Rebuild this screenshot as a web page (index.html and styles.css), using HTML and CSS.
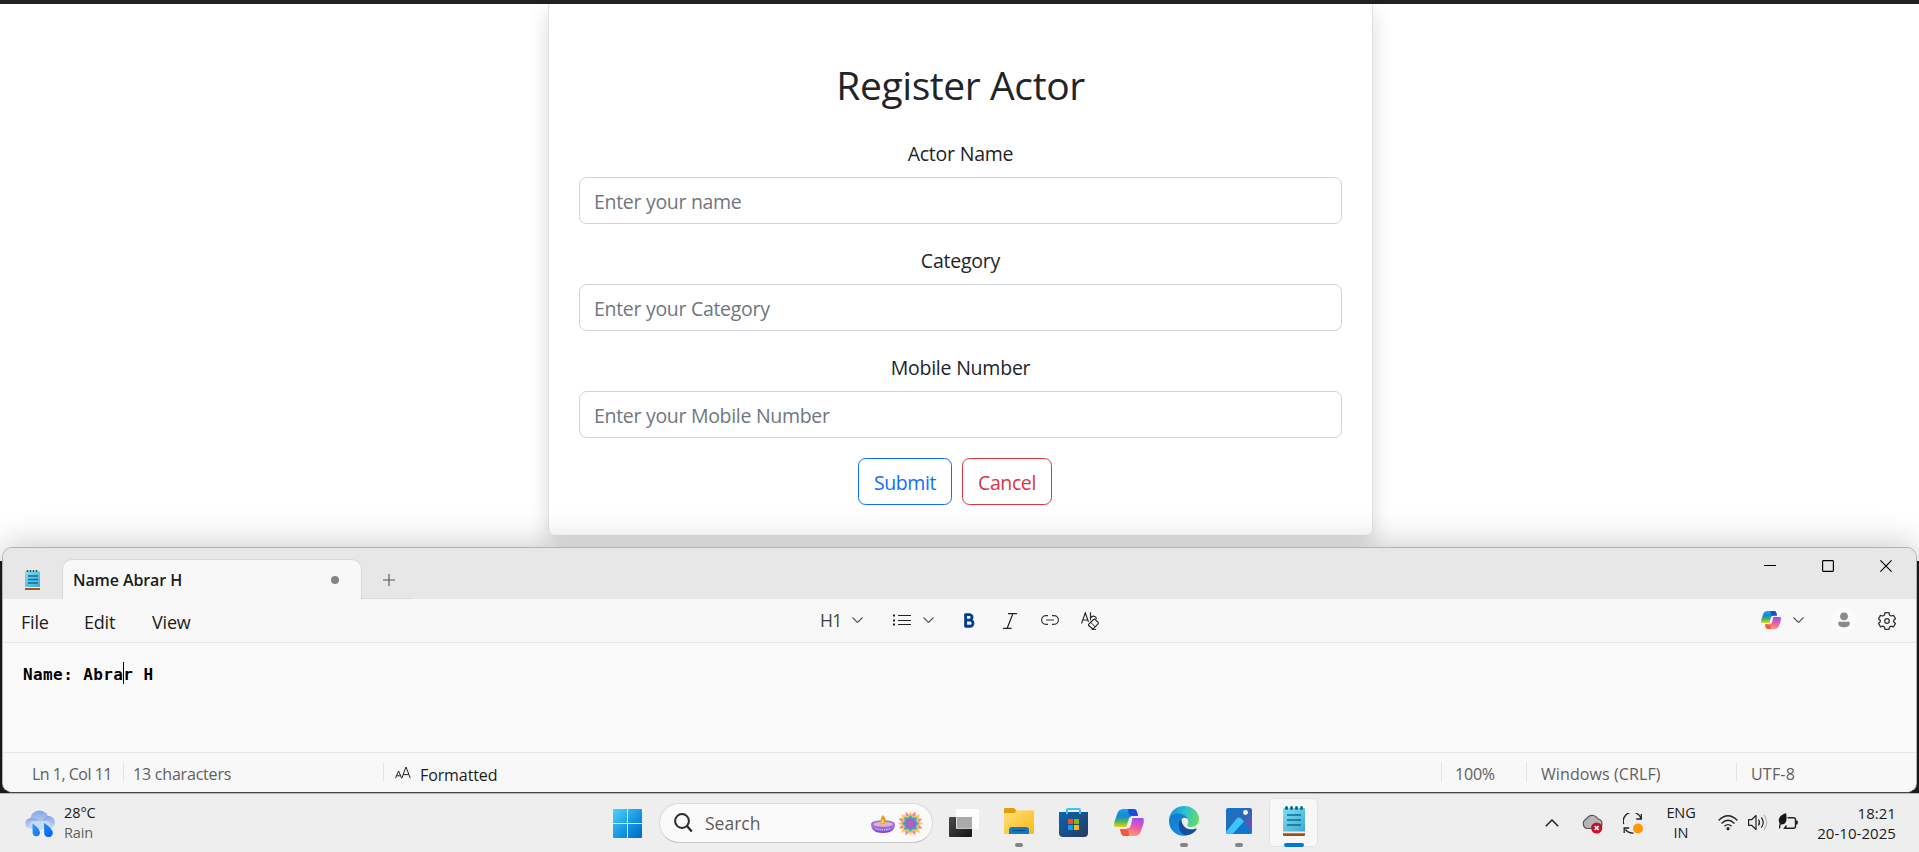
FILE: index.html
```html
<!DOCTYPE html>
<html lang="en">
<head>
<meta charset="utf-8">
<title>Register Actor</title>
<link rel="stylesheet" href="styles.css">
</head>
<body>
<svg class="defs" width="0" height="0" aria-hidden="true">
  <defs>
    <linearGradient id="cpA" x1="0" y1="0" x2="0" y2="1"><stop offset="0" stop-color="#19a5e8"/><stop offset=".4" stop-color="#1488d8"/><stop offset=".7" stop-color="#4fb85a"/><stop offset="1" stop-color="#f4d013"/></linearGradient>
    <linearGradient id="cpB" x1=".6" y1="0" x2=".3" y2="1"><stop offset="0" stop-color="#a24cf0"/><stop offset=".5" stop-color="#ef5f9f"/><stop offset="1" stop-color="#ffa36a"/></linearGradient>
    <linearGradient id="pad" x1="0" y1="0" x2="1" y2="1"><stop offset="0" stop-color="#7fe0f7"/><stop offset="1" stop-color="#3fa9cf"/></linearGradient>
    <linearGradient id="win" x1="0" y1="0" x2="1" y2="1"><stop offset="0" stop-color="#4fd3fb"/><stop offset=".6" stop-color="#1291df"/><stop offset="1" stop-color="#0168c5"/></linearGradient>
    <linearGradient id="fold" x1="0" y1="0" x2="1" y2="1"><stop offset="0" stop-color="#ffe07a"/><stop offset="1" stop-color="#fdb913"/></linearGradient>
    <linearGradient id="store" x1="0" y1="0" x2="1" y2="1"><stop offset="0" stop-color="#0b65b0"/><stop offset="1" stop-color="#253a62"/></linearGradient>
    <linearGradient id="edgeTop" x1="0" y1=".4" x2="1" y2=".6"><stop offset="0" stop-color="#1692df"/><stop offset=".5" stop-color="#2fc0d2"/><stop offset="1" stop-color="#66dd5c"/></linearGradient>
    <linearGradient id="edgeLow" x1="0" y1="0" x2=".5" y2="1"><stop offset="0" stop-color="#1478c8"/><stop offset="1" stop-color="#1590e6"/></linearGradient>
    <linearGradient id="photo" x1="0" y1="0" x2="1" y2=".8"><stop offset="0" stop-color="#0f79c9"/><stop offset=".6" stop-color="#3065b5"/><stop offset="1" stop-color="#7b4eb5"/></linearGradient>
    <linearGradient id="hill" x1="0" y1="1" x2="1" y2="0"><stop offset="0" stop-color="#34c8fa"/><stop offset="1" stop-color="#43c4f3"/></linearGradient>
    <linearGradient id="dark" x1="0" y1="0" x2="1" y2="1"><stop offset="0" stop-color="#4a4a4a"/><stop offset="1" stop-color="#161616"/></linearGradient>
    <linearGradient id="cloud" x1="0" y1="0" x2="0" y2="1"><stop offset="0" stop-color="#84a5e4"/><stop offset="1" stop-color="#d3e1f8"/></linearGradient>
    <linearGradient id="drop" x1="0" y1="0" x2="1" y2="1"><stop offset="0" stop-color="#2f9bf5"/><stop offset="1" stop-color="#0560ff"/></linearGradient>
    <linearGradient id="bowl" x1="0" y1="0" x2="0" y2="1"><stop offset="0" stop-color="#b884ee"/><stop offset="1" stop-color="#7a3fd0"/></linearGradient>
    <symbol id="copilot" viewBox="0 0 30 27">
      <path d="M10 0h9.500c2 0 3 1 3.500 3l.9 3.500h-4.500c-2 0-3 1-3.500 3l-2.500 8.500H0.800C0 16 0 14.500.5 12.500L3.500 4C4.500 1.200 6.500 0 10 0z" fill="url(#cpA)"/>
      <path d="M14 0h5.500c2 0 3 1 3.500 3l1 4h-5c-3 0-4-1-4.500-3z" fill="#1650d8"/>
      <path d="M20 27h-9.500c-2 0-3-1-3.500-3l-1-3.500h4.500c2 0 3-1 3.500-3L16.500 9h12.700c.8 2 .8 3.500.3 5.500l-3 8.500c-1 2.800-3 4-6.500 4z" fill="url(#cpB)"/>
      <path d="M15 27h-4.500c-2 0-3-1-3.500-3l-1-4h4c3 0 4 1 4.500 3z" fill="#ef5b3c"/>
      <path d="M18.800 8h-1.600c-1.500 0-2 .8-2.500 2.300l-2.600 8.700h2c1.500 0 2-.8 2.500-2.300z" fill="#f1f1f1"/>
    </symbol>
    <symbol id="notepad" viewBox="0 0 22 30">
      <path d="M0 26h22v2.800q0 1.200-1 1.200H1q-1 0-1-1.200z" fill="#a34f12"/>
      <path d="M0 25.500h22v1.800H0z" fill="#f3ece6"/>
      <path d="M1 2h20q1 0 1 1v22.500H0V3q0-1 1-1z" fill="url(#pad)"/>
      <path d="M4 9h14M4 14h14M4 19h14" stroke="#0b6c94" stroke-width="1.700"/>
      <g fill="#0e6d8c"><rect x="2" y="0" width="3" height="4" rx="1.500"/><rect x="7" y="0" width="3" height="4" rx="1.500"/><rect x="12" y="0" width="3" height="4" rx="1.500"/><rect x="17" y="0" width="3" height="4" rx="1.500"/></g>
    </symbol>
  </defs>
</svg>

<main class="browser">
  <form class="card">
    <h1 class="card-title">Register Actor</h1>
    <label class="label" for="name">Actor Name</label>
    <input class="field" id="name" placeholder="Enter your name">
    <label class="label" for="category">Category</label>
    <input class="field" id="category" placeholder="Enter your Category">
    <label class="label" for="mobile">Mobile Number</label>
    <input class="field" id="mobile" placeholder="Enter your Mobile Number">
    <div class="actions">
      <button type="button" class="btn btn-submit">Submit</button>
      <button type="button" class="btn btn-cancel">Cancel</button>
    </div>
  </form>
</main>

<section class="notepad">
  <header class="titlebar">
    <svg class="app-icon" width="15" height="20" viewBox="0 0 15 20"><path d="M0 1.500h15V17H0z" fill="url(#pad)"/><path d="M0 17h15v1H0z" fill="#f1e8e0"/><path d="M0 18h15v2H0z" fill="#a8560f"/><path d="M3 6h10M3 9.500h10M3 13h10" stroke="#0b6c94" stroke-width="1.500"/><path d="M2.500 0v2M5.500 0v2M8.500 0v2M11.500 0v2" stroke="#1b5666" stroke-width="1.600"/></svg>
    <div class="tab"><span class="tab-name">Name Abrar H</span><i class="unsaved"></i></div>
    <div class="new-tab"><svg width="12" height="12" viewBox="0 0 12 12"><path d="M6 0v12M0 6h12" stroke="#555" stroke-width="1.100"/></svg></div>
    <div class="window-buttons">
      <svg width="12" height="12" viewBox="0 0 12 12"><path d="M0 5.500h12" stroke="#000"/></svg>
      <svg width="12" height="12" viewBox="0 0 12 12"><rect x=".6" y=".6" width="10.800" height="10.800" rx=".8" fill="none" stroke="#000" stroke-width="1.200"/></svg>
      <svg width="12" height="12" viewBox="0 0 12 12"><path d="M.4.4l11.200 11.200M11.600.4L.4 11.600" stroke="#000" stroke-width="1.200"/></svg>
    </div>
  </header>
  <nav class="menubar">
    <span class="menu menu-file">File</span><span class="menu menu-edit">Edit</span><span class="menu menu-view">View</span>
    <span class="heading-tool">H1</span>
    <svg class="chevron" width="11" height="6" viewBox="0 0 11 6"><path d="M.5.500l5 5 5-5" fill="none" stroke="#555" stroke-width="1.100"/></svg>
    <svg class="list-tool" width="18" height="12" viewBox="0 0 18 12"><path d="M5 1.500h13M5 6.500h13M5 10.500h13" stroke="#222" stroke-width="1.100"/><path d="M0 1.500h2M0 6.500h2M0 10.500h2" stroke="#222" stroke-width="2"/></svg>
    <svg class="chevron" width="11" height="6" viewBox="0 0 11 6"><path d="M.5.500l5 5 5-5" fill="none" stroke="#555" stroke-width="1.100"/></svg>
    <svg class="bold-tool" width="11" height="15" viewBox="0 0 11 15"><path d="M1.600 1.600h3.700a2.700 2.700 0 0 1 0 5.500H1.600zM1.600 7.100h4.300a3.050 3.050 0 0 1 0 6.200H1.600z" fill="none" stroke="#003e92" stroke-width="2.900" stroke-linejoin="round"/></svg>
    <svg class="italic-tool" width="14" height="16" viewBox="0 0 14 16"><path d="M5 .7h9M0 15.300h8.500M9.800.7L4.200 15.300" fill="none" stroke="#222" stroke-width="1.200"/></svg>
    <svg class="link-tool" width="18" height="10" viewBox="0 0 18 10"><path d="M7 .6H5a4.400 4.400 0 0 0 0 8.800h2M11 .6h2a4.400 4.400 0 0 1 0 8.800h-2M5 5h8" fill="none" stroke="#333" stroke-width="1.200"/></svg>
    <svg class="clear-tool" width="18" height="18" viewBox="0 0 18 18"><path d="M.5 11.500L4.300.8 7.500 10M1.800 8h4.800M9.500.3v8M9.500 6c2-3.200 6-1.800 5.800 1" fill="none" stroke="#222" stroke-width="1.100"/><path d="M7.800 12.200l4.700-4.700q.9-.7 1.800 0l2.700 2.700q.7.900 0 1.800l-4.200 4.200q-.9.700-1.800 0l-3.200-2.400q-.7-.8 0-1.600z" fill="#f8f8f8" stroke="#222" stroke-width="1.100"/><path d="M9.800 10.500l4.300 4.200M10.500 17.400h4.500" fill="none" stroke="#222"/></svg>
    <svg class="copilot-tool" width="20" height="18"><use href="#copilot"/></svg>
    <svg class="chevron" width="11" height="6" viewBox="0 0 11 6"><path d="M.5.500l5 5 5-5" fill="none" stroke="#555" stroke-width="1.100"/></svg>
    <svg class="avatar" width="26" height="26" viewBox="0 0 26 26"><circle cx="13" cy="13" r="12.500" fill="#fbfbfb"/><circle cx="13" cy="9.300" r="3.900" fill="#8b8b8b"/><path d="M7.300 14.800h11.400v2q0 3.400-5.700 3.400t-5.700-3.400z" fill="#8b8b8b"/></svg>
    <svg class="gear" width="18" height="18" viewBox="0 0 18 18"><path d="M7 .7h4l.5 2.300 1.700 1 2.300-.7 2 3.400-1.800 1.600v1.500l1.800 1.600-2 3.400-2.300-.7-1.700 1-.5 2.200H7l-.5-2.200-1.700-1-2.300.7-2-3.400L2.300 9.800V8.300L.5 6.700l2-3.400 2.300.7 1.700-1z" fill="none" stroke="#333" stroke-width="1.300" stroke-linejoin="round"/><circle cx="9" cy="9" r="2.300" fill="none" stroke="#333" stroke-width="1.300"/></svg>
  </nav>
  <div class="editor">Name: Abra<i class="caret"></i>r H</div>
  <footer class="status">
    <span class="position">Ln 1, Col 11</span>
    <span class="characters">13 characters</span>
    <span class="format"><svg width="16" height="13" viewBox="0 0 16 13"><path d="M.5 12.200L3.600 5l3 7.200M1.600 9.800h4M6.800 12.200L11 1l4.300 11.200M8.300 8.600h5.500" fill="none" stroke="#222"/></svg><b>Formatted</b></span>
    <span class="zoom">100%</span>
    <span class="line-ending">Windows (CRLF)</span>
    <span class="encoding">UTF-8</span>
  </footer>
</section>

<footer class="taskbar">
  <div class="weather">
    <svg width="30" height="27" viewBox="0 0 30 27"><circle cx="14.500" cy="10" r="9.500" fill="url(#cloud)"/><circle cx="23.500" cy="12.500" r="6.500" fill="url(#cloud)"/><ellipse cx="7" cy="13.500" rx="7" ry="5.800" fill="url(#cloud)"/><rect x="5" y="11" width="20" height="8.300" rx="4" fill="#c9daf7"/><path d="M7.500 13.500q7.500 5 7.500 9a3.700 3.700 0 0 1-7.400 0zM19 13q8.800 5.500 8.800 10a4.300 4.300 0 0 1-8.600 0z" fill="url(#drop)"/></svg>
    <p class="two-line"><span>28°C</span><span class="muted">Rain</span></p>
  </div>
  <svg class="start" width="29" height="29" viewBox="0 0 29 29"><path d="M1 0h13v14H0V1q0-1 1-1zM15 0h13q1 0 1 1v13H15zM0 15h14v14H1q-1 0-1-1zM15 15h14v13q0 1-1 1H15z" fill="url(#win)"/></svg>
  <div class="search">
    <svg width="19" height="20" viewBox="0 0 19 20"><circle cx="8" cy="8" r="6.900" fill="none" stroke="#2b2b2b" stroke-width="2"/><path d="M13 13l4.800 5.500" stroke="#2b2b2b" stroke-width="2.300"/></svg>
    <span class="search-text">Search</span>
    <svg class="festive" width="53" height="27" viewBox="0 0 53 27"><path d="M1 14q0 9 12 9t12-9z" fill="url(#bowl)"/><ellipse cx="13" cy="14" rx="12" ry="3.800" fill="#a56be6"/><ellipse cx="13" cy="14.300" rx="9.800" ry="2.500" fill="#d8b9b4"/><path d="M5 18.500q8 3 16 0" fill="none" stroke="#dcc5fa" stroke-width="1.300" stroke-dasharray="1.500 .8"/><path d="M12.500 5q5 4.500 2.700 8-2.500 2-4.700-.5-.5-2.500 2-7.500z" fill="#f79420"/><path d="M12.600 9q2 2.400.6 4-1.200.5-2-1z" fill="#ffe07a"/>
      <g transform="translate(40.500 13.500)">
        <path d="M0-13L3-7 8.900-8.900 7-3 13 0 7 3 8.900 8.900 3 7 0 13-3 7-8.900 8.900-7 3-13 0-7-3-8.900-8.900-3-7z" transform="rotate(22.500)" fill="#f7849a"/>
        <path d="M0-12L2.500-7 9.400-9.400 7-2.500 12.800 0 7 2.500 9.400 9.400 2.500 7 0 12-2.500 7-9.400 9.400-7 2.500-12.800 0-7-2.500-9.400-9.400-2.500-7z" fill="#ffc955"/>
        <path d="M0-8.800L2.500-6 6.500-6.500 6-2.500 8.800 0 6 2.500 6.500 6.500 2.500 6 0 8.800-2.500 6-6.500 6.500-6 2.500-8.800 0-6-2.500-6.500-6.500-2.500-6z" fill="#2fc2c3"/>
        <path d="M0-6.800L1.900-4.600 5-5 4.600-1.900 6.800 0 4.600 1.900 5 5 1.900 4.600 0 6.800-1.900 4.600-5 5-4.600 1.900-6.800 0-4.600-1.900-5-5-1.900-4.600z" fill="#9e62cf"/><circle r="2.500" fill="#b564b8"/></g></svg>
  </div>
  <ul class="apps">
    <li class="app app-tasks"><svg width="30" height="28" viewBox="0 0 30 28"><rect y="8" width="23" height="20" rx="1" fill="url(#dark)"/><rect x="7" width="23" height="20" rx="1" fill="#fff" fill-opacity=".85"/><path d="M8 8h15v11.500H8z" fill="#aaa"/></svg></li>
    <li class="app running"><svg width="30" height="28" viewBox="0 0 30 28"><path d="M0 2q0-1 1-1h9l3 3h16q1 0 1 1v4H0z" fill="#e0a003"/><path d="M0 7q0-1 1-1h9l3-2.500h16q1 0 1 1V26q0 1-1 1H1q-1 0-1-1z" fill="url(#fold)"/><path d="M5 27v-4q0-3 3-3h14q3 0 3 3v4z" fill="#0f78c8"/><path d="M8.500 23.500h13" stroke="#084c83" stroke-width="1.200"/></svg></li>
    <li class="app app-store"><svg width="29" height="29" viewBox="0 0 29 29"><path d="M8 6V1.500Q8 1 9 1h11q1 0 1 .5V6" fill="none" stroke="#35c7f1" stroke-width="2"/><path d="M0 4h29v21q0 4-4 4H4q-4 0-4-4z" fill="url(#store)"/><path d="M8 6V2M21 6V2" stroke="#35c7f1" stroke-width="2"/><path d="M9 11h5v5H9z" fill="#f25022"/><path d="M15 11h5v5h-5z" fill="#7fba00"/><path d="M9 17h5v5H9z" fill="#00a4ef"/><path d="M15 17h5v5h-5z" fill="#ffb900"/></svg></li>
    <li class="app"><svg width="30" height="27"><use href="#copilot"/></svg></li>
    <li class="app running"><svg width="30" height="30" viewBox="0 0 30 30">
      <path d="M0 15C0 5 8 0 15 0c9 0 15 6.500 15 13 0 5-3.500 8-7.500 8-3.500 0-4.800-1.200-4-2.500 1.500-2 1-4.500-1-6.500L8 9z" fill="url(#edgeTop)"/>
      <path d="M0 15C1 9 5 7.500 9 7.500c5 0 8.500 2.500 10 5.500-3-2-6-1.500-7 1.500-1.200 6 3 13 8 14.200C10 32.500 0 25.500 0 15z" fill="url(#edgeLow)"/>
      <path d="M12.300 13C8 16 9 25 14 28.500c5 2 11-1 13.500-5 .4-1-.3-1.300-1-1C20 25 13 22 12.300 13z" fill="#124f9d"/>
    </svg></li>
    <li class="app running"><svg width="26" height="26" viewBox="0 0 26 26"><rect width="26" height="26" rx="2" fill="url(#photo)"/><path d="M10.500 11q2.500-3 5 0L26 22.500V24q0 2-2 2H2q-1.500 0-1.500-1z" fill="#1275cf"/><path d="M.3 23.500L10.500 10.800q2.500-2.600 5 0L18 13.500 6.500 26H2Q.3 26 .3 23.500z" fill="url(#hill)"/><circle cx="19.500" cy="4.500" r="2.400" fill="#fff"/></svg></li>
    <li class="app active"><svg width="22" height="30"><use href="#notepad"/></svg></li>
  </ul>
  <div class="tray">
    <svg class="tray-more" width="14" height="8" viewBox="0 0 14 8"><path d="M.8 7.200L7 1l6.200 6.200" fill="none" stroke="#222" stroke-width="1.500"/></svg>
    <svg class="tray-cloud" width="21" height="20" viewBox="0 0 21 20"><path d="M5 14.500a5 5 0 0 1-.5-9.500Q7 .5 11.500 1.500q3 .5 4.500 3.500 4 .5 4 5t-5 4.500z" fill="#b5b5b5" stroke="#555" stroke-width="1.200"/><circle cx="14.700" cy="14" r="5.600" fill="#c50f2c"/><path d="M12.700 12l4 4M16.700 12l-4 4" stroke="#fff" stroke-width="1.700"/></svg>
    <svg class="tray-sync" width="20" height="21" viewBox="0 0 20 21"><path d="M.7 11A9 9 0 0 1 18 5.500M18.300 1v5h-5M1.200 20v-5h5M2.500 16.500q3 4 8 3.500" fill="none" stroke="#222" stroke-width="1.300"/><circle cx="15" cy="15.500" r="5" fill="#ff9800"/></svg>
    <p class="two-line language"><span>ENG</span><span>IN</span></p>
    <svg class="tray-wifi" width="20" height="16" viewBox="0 0 20 16"><path d="M.6 5.500q9.400-9.500 18.800 0M3.500 8.500q6.500-6.500 13 0M6.400 11.300q3.600-3.400 7.200 0" fill="none" stroke="#222" stroke-width="1.300"/><circle cx="10" cy="13.700" r="1.600" fill="#222"/></svg>
    <svg class="tray-volume" width="20" height="17" viewBox="0 0 20 17"><path d="M.6 5.700h3L8 1.500v14l-4.400-4.200h-3z" fill="none" stroke="#222" stroke-width="1.200" stroke-linejoin="round"/><path d="M10.500 5.500q2 3 0 6M13.300 3.300q3.800 5.200 0 10.400" fill="none" stroke="#222" stroke-width="1.200"/><path d="M16 1q5.500 7.500 0 15" fill="none" stroke="#bbb" stroke-width="1.300"/></svg>
    <svg class="tray-battery" width="21" height="17" viewBox="0 0 21 17"><path d="M9.500 4.700h6q2 0 2 2v6.600q0 2-2 2H6.500l2-2.800" fill="none" stroke="#222" stroke-width="1.400"/><path d="M18 7.500h1.500q1 1.500 0 4H18z" fill="#222"/><path d="M8 0Q1 2.500.7 7q0 3 2.300 4.500Q8.500 11.500 8.500 6 8.700 2.500 8 0z" fill="#151515"/><path d="M1.500 15.500q0-5 3-8.500" fill="none" stroke="#222" stroke-width="1.200"/></svg>
    <p class="two-line clock"><span>18:21</span><span>20-10-2025</span></p>
  </div>
</footer>
</body>
</html>
```
FILE: styles.css
```css
* { box-sizing: border-box; }
body {
  margin: 0;
  width: 1919px;
  height: 852px;
  overflow: hidden;
  display: flex;
  flex-direction: column;
  font-family: "Open Sans", "Noto Sans", sans-serif;
  color: #1b1b1b;
  background: linear-gradient(#fff 561px, #1c1c1c 561px);
}
svg { display: block; flex: none; }
p, ul, h1 { margin: 0; padding: 0; }
ul { list-style: none; }
.defs { position: absolute; }

/* Registration form */
.browser {
  height: 547px;
  flex: none;
  border-top: 4px solid #212121;
  overflow: hidden;
  display: flex;
  justify-content: center;
  padding-left: 2px;
}
.card {
  width: 825px;
  height: 532px;
  margin-top: -1px;
  padding: 58px 30px 0;
  border: 1px solid #dee2e6;
  border-top: 0;
  border-bottom: 0;
  border-radius: 0 0 7px 7px;
  box-shadow: 0 10px 20px rgba(0, 0, 0, .15);
  color: #212529;
  text-align: center;
  display: flex;
  flex-direction: column;
}
.card-title { font-size: 39px; line-height: 48px; font-weight: 400; letter-spacing: -.4px; margin-bottom: 28px; }
.label { font-size: 19.500px; line-height: 30px; letter-spacing: -.22px; padding-top: 2px; margin-bottom: 8px; }
.field {
  width: 763px;
  height: 47px;
  flex: none;
  margin-bottom: 20px;
  padding: 1px 14px 0;
  border: 1px solid #ced2d9;
  border-radius: 7.500px;
  background: transparent;
  font: 19.500px "Open Sans", sans-serif;
  letter-spacing: -.3px;
}
.field::placeholder { color: #6f7780; opacity: 1; }
.actions { display: flex; justify-content: center; gap: 10px; margin: 0 11px 0 0; }
.btn {
  height: 47px;
  padding: 1px 0 0;
  border: 1px solid;
  border-radius: 7.500px;
  background: transparent;
  font: 19.500px "Open Sans", sans-serif;
  letter-spacing: -.4px;
}
.btn-submit { width: 94px; color: #0d6efd; }
.btn-cancel { width: 90px; color: #dc3545; }

/* Notepad window */
.notepad {
  position: relative;
  height: 246px;
  flex: none;
  margin: 0 2px;
  border: 1px solid #b3b3b3;
  border-bottom-color: #454545;
  border-radius: 10px;
  overflow: hidden;
  background: #f9f9f9;
  box-shadow: 0 0 36px rgba(0, 0, 0, .24);
  clip-path: inset(-60px -2px 0 -2px);
}
.titlebar { height: 51px; background: #e7e7e7; display: flex; align-items: flex-end; }
.app-icon { margin: 0 22px 9px 22px; }
.tab {
  width: 300px;
  height: 40px;
  border: 1px solid #dadada;
  border-bottom: 0;
  border-radius: 10px 10px 0 0;
  background: #f8f8f8;
  display: flex;
  align-items: center;
  padding: 1px 22px 0 10px;
  justify-content: space-between;
}
.tab-name { font-size: 16px; font-weight: 600; letter-spacing: -.1px; white-space: nowrap; }
.unsaved { width: 8px; height: 8px; border-radius: 50%; background: #858585; }
.new-tab { width: 50px; height: 40px; border-bottom: 1px solid #d9d9d9; padding: 15px 0 0 21px; }
.window-buttons { margin-left: auto; display: flex; gap: 46px; padding: 0 24px 27px 0; }
.menubar {
  height: 44px;
  border-bottom: 1px solid #e7e7e7;
  background: #f8f8f8;
  display: flex;
  align-items: center;
  padding: 0 19px 2px 0;
}
.menu { font-size: 18px; letter-spacing: -.2px; padding-top: 4px; }
.menu-file { width: 63px; margin-left: 18px; }
.menu-edit { width: 68px; }
.menu-view { width: 668px; }
.heading-tool { width: 32px; font-size: 17.500px; letter-spacing: -.6px; color: #444; }
.list-tool { margin: 0 12px 0 30px; }
.bold-tool { margin: 2px 0 0 30px; }
.italic-tool { margin: 2px 0 0 28px; }
.link-tool { margin-left: 24px; }
.clear-tool { margin: 2px 0 0 22px; }
.copilot-tool { margin: 0 12px 0 auto; }
.avatar { margin: 1px 21px 0 27px; }
.gear { margin-top: 3px; margin-right: 1px; }
.editor {
  height: 109px;
  padding: 19px 20px;
  font: bold 16px/26px "DejaVu Sans Mono", monospace;
  letter-spacing: .4px;
  color: #000;
  white-space: pre;
}
.caret { display: inline-block; width: 1px; height: 22px; margin: -2px -1px -4px 0; vertical-align: baseline; background: #000; }
.status {
  height: 40px;
  border-top: 1px solid #e7e7e7;
  background: #f8f8f8;
  display: flex;
  padding-top: 9px;
  font-size: 16px;
  letter-spacing: -.2px;
  line-height: 25px;
  color: #606060;
}
.status span { height: 20px; white-space: nowrap; }
.status span + span { border-left: 1px solid #e5e5e5; }
.position { margin-left: 29px; width: 91px; letter-spacing: -.5px; }
.characters { width: 260px; padding-left: 9px; }
.format { display: flex; gap: 9px; padding-left: 11px; color: #1b1b1b; }
.format svg { margin-top: 4px; }
.format b { font-weight: 400; padding-top: 1px; letter-spacing: -.1px; }
.zoom { width: 85px; margin-left: auto; padding-left: 13px; }
.line-ending { width: 210px; padding-left: 14px; letter-spacing: .1px; }
.encoding { width: 180px; padding-left: 14px; letter-spacing: .2px; }

/* Taskbar */
.taskbar {
  position: relative;
  height: 59px;
  border-top: 1px solid #b8b8b8;
  background: #eee;
  display: flex;
  align-items: flex-start;
}
.two-line { display: flex; flex-direction: column; font-size: 14.500px; line-height: 20px; letter-spacing: -.1px; white-space: nowrap; }
.weather { width: 588px; padding: 10px 0 0 25px; display: flex; gap: 9px; }
.weather svg { margin-top: 6px; }
.weather .two-line { margin-top: -1px; }
.muted { color: #606060; }
.start { margin-left: 25px; margin-top: 15px; }
.search {
  width: 274px;
  height: 40px;
  margin: 9px 0 0 17px;
  border: 1px solid #dadada;
  border-bottom-color: #c4c4c4;
  border-radius: 20px;
  background: #fafafa;
  display: flex;
  align-items: center;
  padding: 0 9px 0 14px;
}
.search-text { font-size: 17.500px; letter-spacing: 0; color: #5c5c5c; margin-left: 12px; }
.festive { margin-left: auto; }
.apps { display: flex; margin: 4px 0 0 7px; gap: 7px; }
.app { width: 48px; height: 49px; display: grid; place-items: center; grid-template-rows: 100%; border-radius: 5px; border: 1px solid transparent; }
.app.running, .app.active { grid-template-rows: 44px 4px; }
.app-store { padding-right: 2px; }
.running::after { content: ""; width: 8px; height: 4px; border-radius: 2px; background: #858585; }
.app.active { background: #f8f8f8; border-color: #e2e2e2; width: 49px; margin-left: -1px; }
.active::after { content: ""; width: 20px; height: 4px; border-radius: 2px; background: #0078d4; }
.tray { margin-left: auto; display: flex; padding-right: 23px; }
.tray-more { margin-top: 25px; }
.tray-cloud { margin: 20px 0 0 23px; }
.tray-sync { margin: 19px 0 0 20px; }
.tray .two-line { margin-top: 9px; }
.language { width: 30px; margin-left: 23px; text-align: center; }
.tray-wifi { margin: 21px 0 0 22px; }
.tray-volume { margin: 20px 0 0 10px; }
.tray-battery { margin: 19px 0 0 10px; }
.tray .clock { width: 97px; text-align: right; font-size: 15px; letter-spacing: .05px; }
```
